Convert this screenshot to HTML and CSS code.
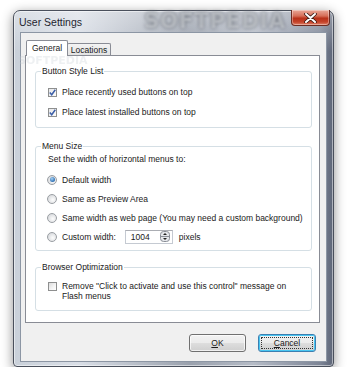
FILE: index.html
```html
<!DOCTYPE html>
<html>
<head>
<meta charset="utf-8">
<link rel="stylesheet" href="styles.css">
</head>
<body>
<div class="stage">
  <div class="window">
    <div class="titlebar">
      <span class="title">User Settings</span>
      <span class="wm-title">SOFTPEDIA</span>
      <div class="close">
        <svg width="13" height="10" viewBox="0 0 13 10"><path d="M2 1 L11 9 M11 1 L2 9" stroke="#3a1a14" stroke-width="3.6" stroke-linecap="round"/><path d="M2 1 L11 9 M11 1 L2 9" stroke="#fff" stroke-width="2" stroke-linecap="round"/></svg>
      </div>
    </div>
    <div class="client">
      <div class="tabs">
        <div class="tab active">General</div>
        <div class="tab">Locations</div>
      </div>
      <div class="panel">
        <span class="wm-body">SOFTPEDIA</span>
        <fieldset class="group g1">
          <legend>Button Style List</legend>
          <div class="row"><span class="check on"><svg width="7" height="7" viewBox="0 0 7 7"><path d="M0.8 3.6 L2.7 5.8 L6.3 0.8" fill="none" stroke="#3b5ea8" stroke-width="1.5"/></svg></span><span>Place recently used buttons on top</span></div>
          <div class="row"><span class="check on"><svg width="7" height="7" viewBox="0 0 7 7"><path d="M0.8 3.6 L2.7 5.8 L6.3 0.8" fill="none" stroke="#3b5ea8" stroke-width="1.5"/></svg></span><span>Place latest installed buttons on top</span></div>
        </fieldset>
        <fieldset class="group g2">
          <legend>Menu Size</legend>
          <div class="intro">Set the width of horizontal menus to:</div>
          <div class="row r"><span class="radio sel"></span><span>Default width</span></div>
          <div class="row r"><span class="radio"></span><span>Same as Preview Area</span></div>
          <div class="row r"><span class="radio"></span><span>Same width as web page (You may need a custom background)</span></div>
          <div class="row r"><span class="radio"></span><span>Custom width:</span>
            <span class="spin"><span class="val">1004</span><span class="arrows"><svg width="10" height="11" viewBox="0 0 10 11"><rect x="0.5" y="0.5" width="9" height="10" rx="3" fill="#e4e6ea" stroke="#8a8e96"/><line x1="1" y1="5.5" x2="9" y2="5.5" stroke="#8a8e96"/><path d="M3 4 L5 2 L7 4 Z" fill="#222"/><path d="M3 7 L5 9 L7 7 Z" fill="#222"/></svg></span></span>
            <span class="unit">pixels</span></div>
        </fieldset>
        <fieldset class="group g3">
          <legend>Browser Optimization</legend>
          <div class="row top"><span class="check"></span><span class="wrap">Remove "Click to activate and use this control" message on Flash menus</span></div>
        </fieldset>
      </div>
      <div class="buttons">
        <div class="btn"><u>O</u>K</div>
        <div class="btn def"><span class="focus"><u>C</u>ancel</span></div>
      </div>
    </div>
  </div>
</div>
</body>
</html>
```

FILE: styles.css
```css
html, body { margin: 0; padding: 0; background: #fff; }
body { font-family: "Liberation Sans", Arial, sans-serif; font-size: 8.5px; color: #1a1a1a; }

.stage { padding: 10px 0 0 13px; }

.window {
  position: relative;
  width: 321px;
  height: 357px;
  box-sizing: border-box;
  border: 1px solid #4a505c;
  border-radius: 7px 7px 4px 4px;
  background:
    linear-gradient(to bottom, rgba(255,255,255,0.35), rgba(255,255,255,0) 40px),
    linear-gradient(to right, #c9d0d9 0%, #d9dee6 20%, #b9bfc9 38%, #9aa1ad 55%, #b5bbc6 75%, #7d8596 96%, #5e6678 100%);
  box-shadow: 0 3px 12px rgba(0,0,0,0.45), inset 0 0 0 1px rgba(255,255,255,0.5);
  display: flex;
  flex-direction: column;
}

.titlebar {
  position: relative;
  height: 21px;
  display: flex;
  align-items: center;
  padding-left: 5px;
}
.title { font-family: "Liberation Sans", Arial, sans-serif; font-size: 10.5px; color: #1e2530; position: relative; z-index: 2; }

.wm-title {
  position: absolute;
  left: 130px;
  top: -2px;
  font-family: "DejaVu Sans", sans-serif;
  font-weight: bold;
  font-size: 21px;
  letter-spacing: 1px;
  color: rgba(235,238,242,0.6);
  text-shadow: 0 0 3px rgba(60,65,75,0.9);
  filter: blur(0.8px);
}

.close {
  position: absolute;
  top: -1px;
  right: 3px;
  width: 39px;
  height: 16px;
  box-sizing: border-box;
  border: 1px solid #6d2c22;
  border-top: none;
  border-radius: 0 0 4px 4px;
  background: linear-gradient(to bottom, #e9a898 0%, #d66e58 40%, #b93119 55%, #c4432a 80%, #e0826a 100%);
  box-shadow: inset 0 0 0 1px rgba(255,255,255,0.35);
  display: flex;
  align-items: center;
  justify-content: center;
}

.client {
  margin: 0 6px 4px 6px;
  flex: 1;
  border: 1px solid #8c96a4;
  background: #f0f0f0;
  display: flex;
  flex-direction: column;
  padding-top: 8px;
  padding-left: 4px;
  padding-right: 6px;
  box-sizing: border-box;
}

.tabs {
  display: flex;
  align-items: flex-end;
  height: 14px;
  padding-left: 1px;
  position: relative;
  z-index: 2;
}
.tab {
  box-sizing: border-box;
  height: 12px;
  padding: 0 3px;
  border: 1px solid #898c95;
  border-bottom: none;
  background: linear-gradient(to bottom, #f3f3f3, #e3e3e3);
  display: flex;
  align-items: center;
  justify-content: center;
  border-radius: 2px 2px 0 0;
  width: 44px;
  margin-left: -1px;
}
.tab.active {
  height: 16px;
  width: 42px;
  margin-bottom: -1px;
  margin-left: 0;
  background: #fff;
  padding-bottom: 2px;
  z-index: 3;
}

.panel {
  position: relative;
  height: 268px;
  box-sizing: border-box;
  border: 1px solid #898c95;
  background: #fff;
  padding: 10px 7px 0 9px;
  display: flex;
  flex-direction: column;
}

.wm-body {
  position: absolute;
  left: -8px;
  top: 0;
  line-height: 10px;
  font-family: "DejaVu Sans", sans-serif;
  font-weight: bold;
  font-size: 11px;
  color: rgba(200,205,212,0.3);
  filter: blur(0.5px);
}

.group {
  margin: 0;
  border: 1px solid #d5dfe5;
  border-radius: 3px;
  padding: 0 0 0 12px;
  min-width: 0;
  position: relative;
}
.group legend {
  padding: 0 1px;
  margin-left: -7px;
  color: #1a1a1a;
}

.g1 { height: 62px; padding-top: 6px; box-sizing: border-box; }
.g2 { margin-top: 13px; height: 110px; box-sizing: border-box; padding-top: 0; }
.g3 { margin-top: 11px; height: 49px; box-sizing: border-box; padding-top: 9px; }

.row { display: flex; align-items: center; height: 20px; }
.row.r { height: 19px; }
.row.top { align-items: flex-start; height: auto; }
.intro { height: 14px; display: flex; align-items: center; padding-top: 1px; margin-bottom: 4px; }

.check {
  width: 9px;
  height: 9px;
  box-sizing: border-box;
  border: 1px solid #8e8f8f;
  background: linear-gradient(135deg, #dcdcdc, #f5f5f5 60%, #fff);
  margin-right: 5px;
  display: flex;
  align-items: center;
  justify-content: center;
  flex: none;
}
.check.on { background: linear-gradient(135deg, #e8e8e8, #fafafa); }
.row.top .check { margin-top: 1px; }
.wrap { width: 230px; line-height: 10px; }

.radio {
  width: 10px;
  height: 10px;
  box-sizing: border-box;
  border-radius: 50%;
  border: 1px solid #9a9ea3;
  background: radial-gradient(circle at 60% 60%, #fdfdfd, #d7d9dc 80%);
  margin-right: 5px;
  margin-left: -1px;
  flex: none;
  position: relative;
}
.radio.sel::after {
  content: "";
  position: absolute;
  left: 1.5px;
  top: 1.5px;
  width: 5px;
  height: 5px;
  border-radius: 50%;
  background: radial-gradient(circle at 40% 35%, #a9d3f5, #2d6fb3 70%, #1b4f8a);
}

.spin {
  margin-left: 9px;
  width: 48px;
  height: 14px;
  box-sizing: border-box;
  border: 1px solid #c5cad2;
  border-top-color: #abadb3;
  background: #fff;
  display: flex;
  align-items: center;
  justify-content: space-between;
  padding: 0 2px 0 5px;
}
.arrows { display: flex; }
.unit { margin-left: 6px; }

.buttons {
  display: flex;
  justify-content: flex-end;
  gap: 12px;
  margin-top: 11px;
  padding-right: 4px;
}
.btn {
  width: 57px;
  height: 18px;
  box-sizing: border-box;
  border: 1px solid #707070;
  border-radius: 3px;
  background: linear-gradient(to bottom, #f2f2f2 0%, #ebebeb 48%, #dddddd 52%, #cfcfcf 100%);
  box-shadow: inset 0 0 0 1px rgba(255,255,255,0.7);
  display: flex;
  align-items: center;
  justify-content: center;
}
.btn.def {
  width: 58px;
  border-color: #3c7fb1;
  box-shadow: inset 0 0 0 1px #48c6f1;
  padding: 2px;
}
.focus {
  flex: 1;
  align-self: stretch;
  border: 1px dotted #333;
  display: flex;
  align-items: center;
  justify-content: center;
}
u { text-decoration: underline; }
```
